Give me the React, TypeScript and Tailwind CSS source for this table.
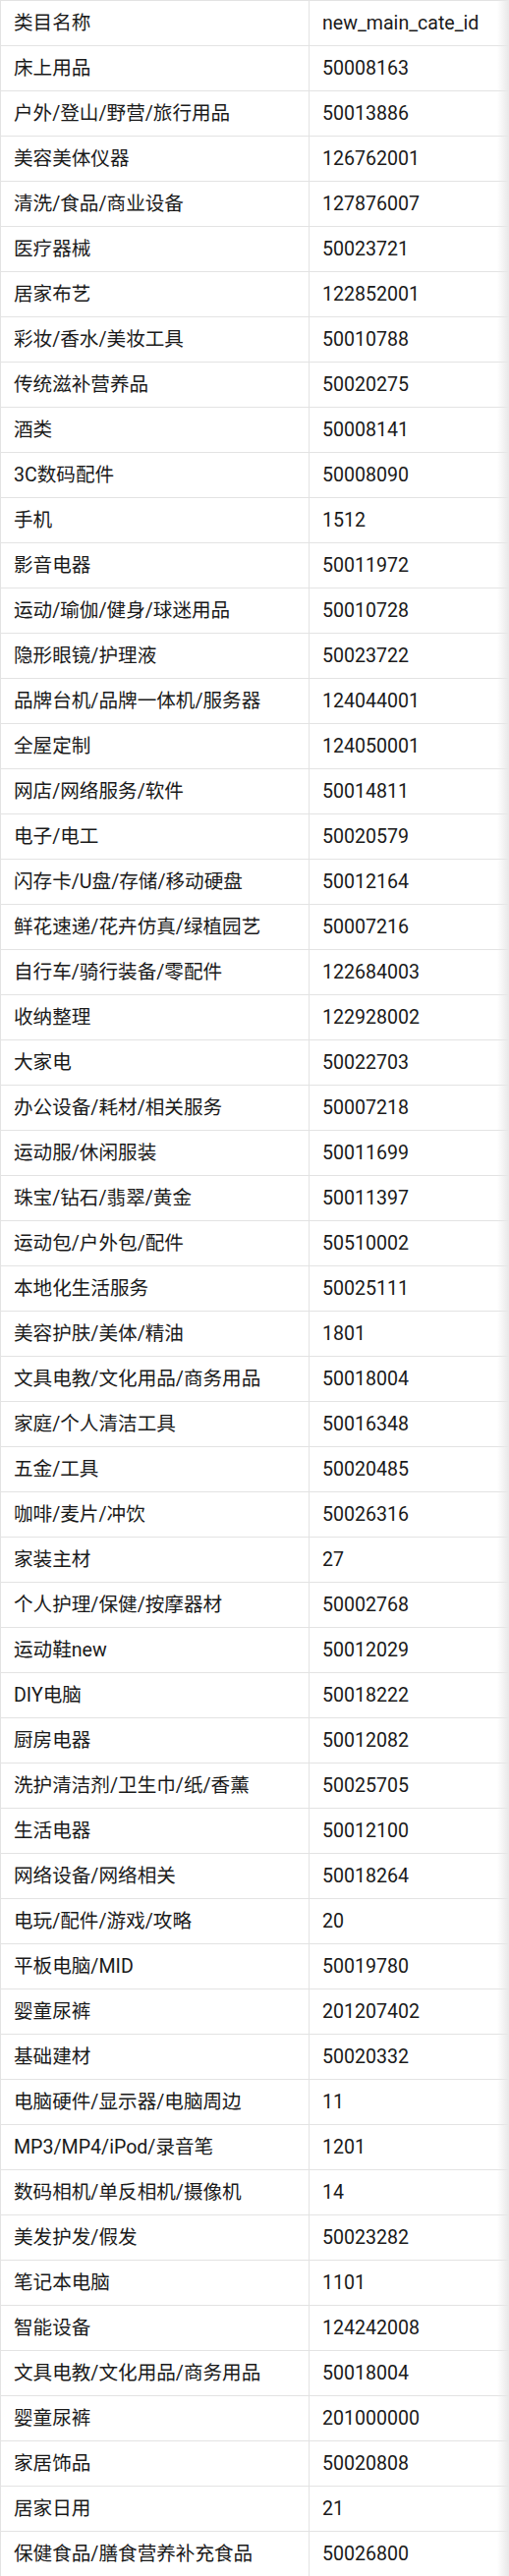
const rows: [string, string][] = [
  ["床上用品", "50008163"],
  ["户外/登山/野营/旅行用品", "50013886"],
  ["美容美体仪器", "126762001"],
  ["清洗/食品/商业设备", "127876007"],
  ["医疗器械", "50023721"],
  ["居家布艺", "122852001"],
  ["彩妆/香水/美妆工具", "50010788"],
  ["传统滋补营养品", "50020275"],
  ["酒类", "50008141"],
  ["3C数码配件", "50008090"],
  ["手机", "1512"],
  ["影音电器", "50011972"],
  ["运动/瑜伽/健身/球迷用品", "50010728"],
  ["隐形眼镜/护理液", "50023722"],
  ["品牌台机/品牌一体机/服务器", "124044001"],
  ["全屋定制", "124050001"],
  ["网店/网络服务/软件", "50014811"],
  ["电子/电工", "50020579"],
  ["闪存卡/U盘/存储/移动硬盘", "50012164"],
  ["鲜花速递/花卉仿真/绿植园艺", "50007216"],
  ["自行车/骑行装备/零配件", "122684003"],
  ["收纳整理", "122928002"],
  ["大家电", "50022703"],
  ["办公设备/耗材/相关服务", "50007218"],
  ["运动服/休闲服装", "50011699"],
  ["珠宝/钻石/翡翠/黄金", "50011397"],
  ["运动包/户外包/配件", "50510002"],
  ["本地化生活服务", "50025111"],
  ["美容护肤/美体/精油", "1801"],
  ["文具电教/文化用品/商务用品", "50018004"],
  ["家庭/个人清洁工具", "50016348"],
  ["五金/工具", "50020485"],
  ["咖啡/麦片/冲饮", "50026316"],
  ["家装主材", "27"],
  ["个人护理/保健/按摩器材", "50002768"],
  ["运动鞋new", "50012029"],
  ["DIY电脑", "50018222"],
  ["厨房电器", "50012082"],
  ["洗护清洁剂/卫生巾/纸/香薰", "50025705"],
  ["生活电器", "50012100"],
  ["网络设备/网络相关", "50018264"],
  ["电玩/配件/游戏/攻略", "20"],
  ["平板电脑/MID", "50019780"],
  ["婴童尿裤", "201207402"],
  ["基础建材", "50020332"],
  ["电脑硬件/显示器/电脑周边", "11"],
  ["MP3/MP4/iPod/录音笔", "1201"],
  ["数码相机/单反相机/摄像机", "14"],
  ["美发护发/假发", "50023282"],
  ["笔记本电脑", "1101"],
  ["智能设备", "124242008"],
  ["文具电教/文化用品/商务用品", "50018004"],
  ["婴童尿裤", "201000000"],
  ["家居饰品", "50020808"],
  ["居家日用", "21"],
  ["保健食品/膳食营养补充食品", "50026800"],
];

function Row({ name, id }: { name: string; id: string }) {
  return (
    <div className="grid grid-cols-[314px_1fr] h-[46px] border-b border-[#e3e3e3]">
      <div className="flex items-center px-[13px] border-r border-[#e3e3e3] whitespace-nowrap">{name}</div>
      <div className="flex items-center px-[13px] whitespace-nowrap">{id}</div>
    </div>
  );
}

export default function App() {
  return (
    <div className="relative w-[518px] overflow-hidden bg-white">
      <div
        className="w-[540px] border-t border-l border-[#e3e3e3] text-[19.6px] text-[#1a1a1a] leading-none"
        style={{ fontFamily: "Roboto, 'Noto Sans CJK SC', sans-serif" }}
      >
        <Row name="类目名称" id="new_main_cate_id" />
        {rows.map(([name, id], i) => (
          <Row key={i} name={name} id={id} />
        ))}
      </div>
      <div className="absolute top-0 right-0 bottom-0 w-[12px] bg-gradient-to-r from-white/0 to-[#e8e8e8] pointer-events-none" />
    </div>
  );
}
